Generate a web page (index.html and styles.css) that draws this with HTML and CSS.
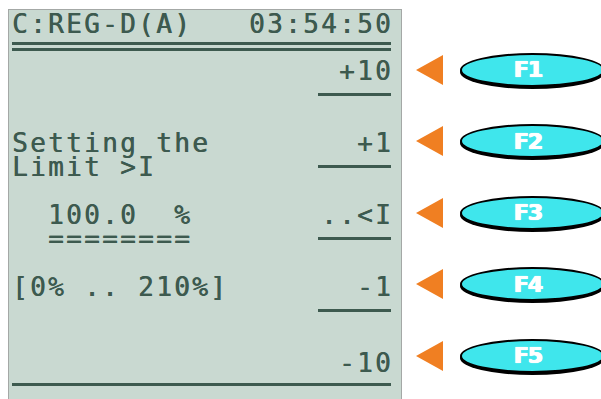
FILE: index.html
```html
<!DOCTYPE html>
<html lang="en">
<head>
  <meta charset="UTF-8">
  <title>Limit Setting - Softkeys</title>
  <link rel="stylesheet" href="styles.css">
</head>
<body>
  <div class="screen">
    <div class="lcd">
      <div class="lcd-head">
        <span>C:REG-D(A)</span>
        <span class="trim">03:54:50</span>
      </div>
      <div class="lcd-rule"></div>

      <div class="soft-row first">
        <div class="soft-text"></div>
        <div class="soft-key"><span class="trim">+10</span></div>
      </div>
      <div class="soft-row">
        <div class="soft-text">Setting the
Limit &gt;I</div>
        <div class="soft-key"><span class="trim">+1</span></div>
      </div>
      <div class="soft-row">
        <div class="soft-text">  100.0  %
  ========</div>
        <div class="soft-key"><span class="trim">..&lt;I</span></div>
      </div>
      <div class="soft-row">
        <div class="soft-text">[0% .. 210%]</div>
        <div class="soft-key"><span class="trim">-1</span></div>
      </div>
      <div class="soft-row last">
        <div class="soft-text"></div>
        <div class="soft-key"><span class="trim">-10</span></div>
      </div>
      <div class="lcd-foot"></div>
    </div>

    <div class="keys">
      <div class="key-row"><span class="arrow"></span><span class="fkey">F1</span></div>
      <div class="key-row"><span class="arrow"></span><span class="fkey">F2</span></div>
      <div class="key-row"><span class="arrow"></span><span class="fkey">F3</span></div>
      <div class="key-row"><span class="arrow"></span><span class="fkey">F4</span></div>
      <div class="key-row"><span class="arrow"></span><span class="fkey">F5</span></div>
    </div>
  </div>
</body>
</html>
```

FILE: styles.css
```css
/* General */
html, body {
  margin: 0;
  padding: 0;
  background: #fff;
  overflow: hidden;
}

.screen {
  display: flex;
  align-items: flex-start;
}

/* LCD panel */
.lcd {
  flex-shrink: 0;
  box-sizing: border-box;
  width: 394px;
  height: 400px;
  margin: 9px 0 0 8px;
  padding: 2px 10px 0 3px;
  background: #c9d9d1;
  border: 1px solid #a4a8a6;
  border-bottom: none;
  color: #3d5a4f;
  font-family: "DejaVu Sans Mono", "Liberation Mono", monospace;
  font-size: 26px;
  letter-spacing: 2.35px;
  line-height: 24px;
  text-shadow: 0.6px 0 0 #3d5a4f;
}

.trim {
  margin-right: -2px;
}

.lcd-head {
  display: flex;
  justify-content: space-between;
}

.lcd-rule {
  height: 3px;
  margin-top: 6px;
  border-top: 3px solid #3d5a4f;
  border-bottom: 3px solid #3d5a4f;
}

.soft-row {
  box-sizing: border-box;
  display: flex;
  align-items: flex-start;
  height: 72px;
  padding-top: 35px;
}

.soft-row.first {
  height: 45px;
  padding-top: 8px;
}

.soft-row.last {
  height: 62px;
  padding-top: 39px;
}

.soft-text {
  flex: 1;
  white-space: pre;
}

.soft-key {
  width: 73px;
  text-align: right;
  padding-bottom: 10px;
  border-bottom: 3px solid #3d5a4f;
}

.soft-row.last .soft-key {
  border-bottom: none;
}

.lcd-foot {
  margin-top: 9px;
  border-top: 3px solid #3d5a4f;
}

/* Function keys */
.keys {
  flex-shrink: 0;
  padding-top: 34px;
}

.key-row {
  display: flex;
  align-items: center;
  height: 71.5px;
}

.arrow {
  width: 0;
  height: 0;
  margin-left: 14px;
  border-top: 15px solid transparent;
  border-bottom: 15px solid transparent;
  border-right: 27px solid #f07f22;
}

.fkey {
  box-sizing: border-box;
  display: flex;
  align-items: center;
  justify-content: center;
  width: 145px;
  height: 34px;
  margin-left: 17px;
  padding-right: 9px;
  background: #3fe6ec;
  border: 2px solid #000;
  border-radius: 50%;
  box-shadow: 0 2px 0 #000;
  color: #fff;
  font-family: "DejaVu Sans", sans-serif;
  font-weight: bold;
  font-size: 22px;
  letter-spacing: -1px;
  text-shadow: 0.6px 0 0 #fff, -0.6px 0 0 #fff, 0 0 1px #fff;
}
```
